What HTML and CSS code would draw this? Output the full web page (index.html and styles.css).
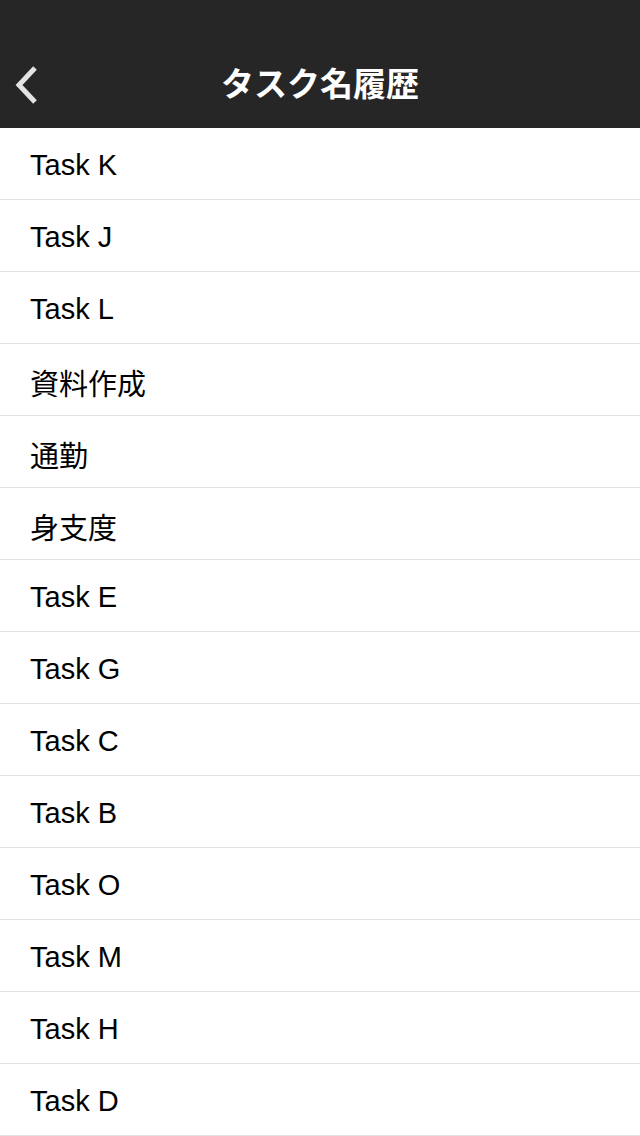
FILE: index.html
```html
<!DOCTYPE html>
<html lang="ja">
<head>
<meta charset="utf-8">
<link rel="stylesheet" href="styles.css">
</head>
<body>
<header class="header">
  <div class="statusbar"></div>
  <div class="navbar">
    <button class="back" aria-label="戻る">
      <svg width="30" height="42" viewBox="0 0 30 42"><path d="M23 4 L7 21 L23 38" fill="none" stroke="#e3e3e3" stroke-width="5" stroke-linecap="butt" stroke-linejoin="miter"/></svg>
    </button>
    <h1 class="title">タスク名履歴</h1>
  </div>
</header>
<ul class="list">
  <li class="row">Task K</li>
  <li class="row">Task J</li>
  <li class="row">Task L</li>
  <li class="row">資料作成</li>
  <li class="row">通勤</li>
  <li class="row">身支度</li>
  <li class="row">Task E</li>
  <li class="row">Task G</li>
  <li class="row">Task C</li>
  <li class="row">Task B</li>
  <li class="row">Task O</li>
  <li class="row">Task M</li>
  <li class="row">Task H</li>
  <li class="row">Task D</li>
</ul>
</body>
</html>
```
FILE: styles.css
```css
html, body {
  margin: 0;
  padding: 0;
  background: #ffffff;
}
body {
  width: 640px;
  height: 1136px;
  overflow: hidden;
  font-family: "Liberation Sans", "Noto Sans CJK JP", sans-serif;
}
.header {
  background: #262626;
  height: 128px;
  display: flex;
  flex-direction: column;
}
.statusbar {
  height: 40px;
}
.navbar {
  height: 88px;
  position: relative;
  display: flex;
  align-items: center;
  justify-content: center;
}
.back {
  position: absolute;
  left: 12px;
  top: 24px;
  padding: 0;
  margin: 0;
  border: 0;
  background: transparent;
  display: flex;
}
.title {
  margin: 0;
  color: #ffffff;
  font-family: "Noto Sans CJK JP", sans-serif;
  font-weight: 700;
  font-size: 33px;
  line-height: 1;
  margin-top: -4px;
}
.list {
  list-style: none;
  margin: 0;
  padding: 0;
}
.row {
  box-sizing: border-box;
  height: 72px;
  padding-top: 4px;
  border-bottom: 1px solid #e3e3e3;
  display: flex;
  align-items: center;
  padding-left: 30px;
  font-size: 29px;
  color: #000000;
}
```
